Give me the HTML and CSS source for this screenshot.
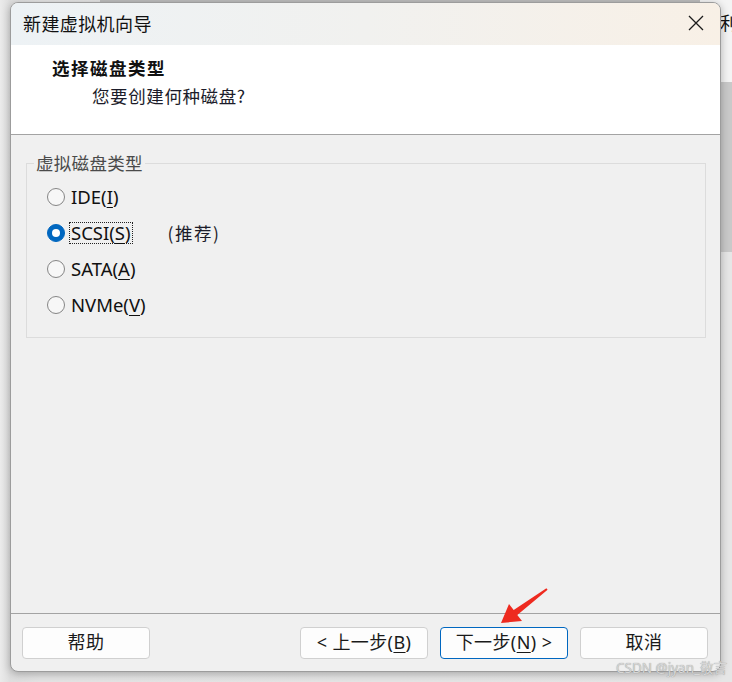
FILE: index.html
```html
<!DOCTYPE html>
<html lang="zh-CN">
<head>
<meta charset="utf-8">
<title>新建虚拟机向导</title>
<link rel="stylesheet" href="styles.css">
</head>
<body>
<div class="desk">
  <div class="top-strip"></div>
  <div class="behind-win"><span class="behind-text">利</span></div>
  <div class="behind-gray"></div>

  <div class="window">
    <div class="titlebar">
      <span class="title">新建虚拟机向导</span>
      <span class="close">
        <svg width="16" height="16" viewBox="0 0 16 16"><path d="M1 1 L15 15 M15 1 L1 15" stroke="#1b1b1b" stroke-width="1.3" fill="none"/></svg>
      </span>
    </div>
    <div class="header">
      <div class="h-title">选择磁盘类型</div>
      <div class="h-sub">您要创建何种磁盘?</div>
    </div>
    <div class="body">
      <fieldset class="group">
        <legend class="legend">虚拟磁盘类型</legend>
        <div class="row"><span class="radio"></span><span class="label">IDE(<u>I</u>)</span></div>
        <div class="row"><span class="radio checked"></span><span class="label focus">SCSI(<u>S</u>)</span><span class="rec">(推荐)</span></div>
        <div class="row"><span class="radio"></span><span class="label">SATA(<u>A</u>)</span></div>
        <div class="row"><span class="radio"></span><span class="label">NVMe(<u>V</u>)</span></div>
      </fieldset>
    </div>
    <div class="footer">
      <button class="btn">帮助</button>
      <span class="spacer"></span>
      <button class="btn">&lt;&nbsp;上一步(<u>B</u>)</button>
      <button class="btn primary">下一步(<u>N</u>)&nbsp;&gt;</button>
      <button class="btn">取消</button>
    </div>
  </div>

  <svg class="arrow" width="732" height="682" viewBox="0 0 732 682">
    <polygon points="501,623 509,604 513.7,610.1 546.4,588.2 547.6,589.8 517.3,614.9 522,621" fill="#ee2a1f"/>
  </svg>
  <div class="watermark">CSDN @jyan_敬言</div>
</div>
</body>
</html>
```

FILE: styles.css
```css
html, body {
  margin: 0;
  padding: 0;
}
body {
  width: 732px;
  height: 682px;
  overflow: hidden;
  background: #e3e3e3;
  font-family: "Noto Sans", "Noto Sans CJK SC", sans-serif;
  color: #1a1a1a;
}
.desk {
  position: relative;
  width: 732px;
  height: 682px;
  background: linear-gradient(90deg, #ebebeb 0px, #dedede 10px, #e4e4e4 40px, #e6e6e6 100%);
  padding-top: 2px;
  box-sizing: border-box;
}
.top-strip {
  position: absolute;
  left: 100px;
  top: 0;
  width: 625px;
  height: 3px;
  background: #bdbdbd;
}
.behind-win {
  position: absolute;
  left: 700px;
  top: 0;
  width: 40px;
  height: 82px;
  background: #f4f4f4;
  overflow: hidden;
}
.behind-text {
  position: absolute;
  left: 20px;
  top: 12px;
  font-family: "Noto Sans CJK SC", sans-serif;
  font-size: 18px;
  line-height: 20px;
  color: #111;
}
.behind-gray {
  position: absolute;
  left: 700px;
  top: 82px;
  width: 40px;
  height: 170px;
  background: #c9c9c9;
}
.window {
  position: relative;
  z-index: 1;
  margin-left: 10px;
  width: 711px;
  height: 670px;
  box-sizing: border-box;
  border: 1px solid #9c9c9c;
  border-radius: 8px;
  background: #f0f0f0;
  box-shadow: 0 2px 9px rgba(0, 0, 0, 0.28);
  display: flex;
  flex-direction: column;
  overflow: hidden;
}
.titlebar {
  height: 42px;
  flex: none;
  display: flex;
  align-items: center;
  background: linear-gradient(90deg, #edf2f5 0%, #f1f1ef 50%, #f8f0e6 100%);
}
.title {
  flex: 1;
  padding-left: 12px;
  padding-bottom: 2px;
  font-family: "Noto Sans CJK SC", sans-serif;
  font-size: 18px;
  line-height: 24px;
  letter-spacing: 0.4px;
  color: #111;
}
.close {
  width: 46px;
  height: 42px;
  margin-right: 1px;
  display: flex;
  align-items: center;
  justify-content: center;
  padding-bottom: 2px;
  box-sizing: border-box;
}
.header {
  height: 90px;
  flex: none;
  box-sizing: border-box;
  background: #ffffff;
  border-bottom: 1px solid #a3a3a3;
  padding-top: 11px;
  font-family: "Noto Sans CJK SC", sans-serif;
  font-size: 17.5px;
  line-height: 24px;
}
.h-title {
  padding-left: 41px;
  font-weight: 700;
  color: #111;
  letter-spacing: 1.5px;
}
.h-sub {
  padding-left: 81px;
  margin-top: 4px;
  color: #1c1c2a;
  letter-spacing: 0.6px;
}
.body {
  flex: 1;
  padding: 18px 14px 0 15px;
}
.group {
  margin: 0;
  padding: 6px 0 14px 0;
  border: 1px solid #dcdcdc;
  min-width: 0;
}
.legend {
  margin-left: 7px;
  padding: 0 2px;
  font-family: "Noto Sans CJK SC", sans-serif;
  font-size: 17.5px;
  line-height: 20px;
  color: #4a4a4a;
  letter-spacing: 0.3px;
}
.row {
  height: 36px;
  display: flex;
  align-items: center;
  padding-left: 20px;
}
.radio {
  width: 18px;
  height: 18px;
  box-sizing: border-box;
  border: 1px solid #858585;
  border-radius: 50%;
  background: #f7f7f7;
  flex: none;
  position: relative;
}
.radio.checked {
  background: #0067c0;
  border-color: #0067c0;
}
.radio.checked::after {
  content: "";
  position: absolute;
  left: 4px;
  top: 4px;
  width: 8px;
  height: 8px;
  border-radius: 50%;
  background: #ffffff;
}
.label {
  margin-left: 4px;
  font-size: 18.5px;
  line-height: 20px;
  color: #111;
  padding: 0 1px;
  border: 1px solid transparent;
}
.label u {
  text-underline-offset: 3px;
}
.label.focus {
  border: 1px dotted #222;
}
.rec {
  margin-left: 35px;
  font-family: "Noto Sans CJK SC", sans-serif;
  font-size: 17.5px;
  line-height: 20px;
  letter-spacing: 1.5px;
  color: #1c1c2a;
}
.footer {
  flex: none;
  border-top: 1px solid #a3a3a3;
  padding: 13px 12px 12px 11px;
  display: flex;
  gap: 12px;
}
.spacer {
  flex: 1;
}
.btn {
  width: 128px;
  height: 32px;
  box-sizing: border-box;
  margin: 0;
  padding: 0 0 2px 0;
  border: 1px solid #d0d0d0;
  border-radius: 4px;
  background: #fdfdfd;
  font-family: "Noto Sans", "Noto Sans CJK SC", sans-serif;
  font-size: 18px;
  line-height: 22px;
  letter-spacing: 0.4px;
  color: #1a1a1a;
  white-space: nowrap;
}
.btn u {
  text-underline-offset: 3px;
}
.btn.primary {
  border-color: #0067c0;
}
.arrow {
  position: absolute;
  left: 0;
  top: 0;
  z-index: 2;
  pointer-events: none;
}
.watermark {
  position: absolute;
  z-index: 3;
  left: 616px;
  top: 659px;
  font-family: "Noto Sans", "Noto Sans CJK SC", sans-serif;
  font-size: 13.5px;
  line-height: 18px;
  color: #d6d6d6;
  text-shadow: 0 0 1px #888888;
  white-space: nowrap;
}
```
